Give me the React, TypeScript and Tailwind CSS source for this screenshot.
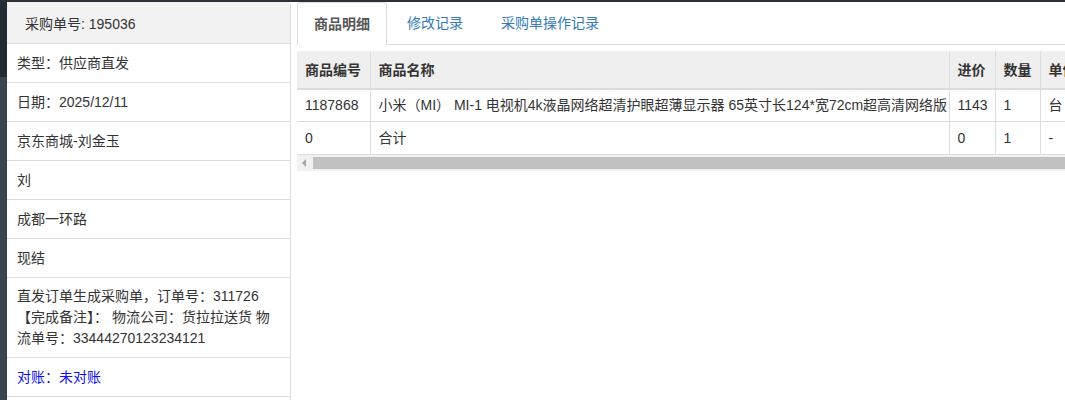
import React from "react";

const rows = [
  "类型：供应商直发",
  "日期：2025/12/11",
  "京东商城-刘金玉",
  "刘",
  "成都一环路",
  "现结",
];

export default function App() {
  return (
    <div
      className="w-[1065px] h-[400px] overflow-hidden bg-white flex flex-col text-[14px] leading-5 text-[#333]"
      style={{ fontFamily: '"Liberation Sans", Arial, "Noto Sans CJK SC", sans-serif' }}
    >
      <div className="h-[2px] bg-[#2a3138] shrink-0" />
      <div className="flex flex-1 min-h-0">
        {/* dark sidebar edge */}
        <div className="w-[7px] shrink-0 flex flex-col">
          <div className="h-[75px] bg-[#232a31] shrink-0" />
          <div className="flex-1 bg-[#3a444e]" />
        </div>
        {/* left panel */}
        <div className="w-[284px] shrink-0 border-r border-[#dcdcdc] rounded-tr-[4px] flex flex-col">
          <div className="h-[42px] shrink-0 bg-[#f2f2f2] pl-[18px] pt-[3px] flex items-center border-b border-[#dddddd] rounded-tr-[4px]">
            采购单号: 195036
          </div>
          {rows.map((r) => (
            <div key={r} className="shrink-0 px-[10px] py-[9px] border-b border-[#dddddd]">
              {r}
            </div>
          ))}
          <div className="shrink-0 px-[10px] py-[8px] leading-[21px] border-b border-[#dddddd]">
            直发订单生成采购单，订单号：311726
            <br />
            【完成备注】： 物流公司：货拉拉送货 物
            <br />
            流单号：33444270123234121
          </div>
          <div className="shrink-0 px-[10px] py-[9px] border-b border-[#dddddd] text-[#1010f0]">
            对账：未对账
          </div>
        </div>
        <div className="w-[6px] shrink-0" />
        {/* right panel */}
        <div className="flex-1 min-w-0 flex flex-col">
          <div className="flex border-b border-[#dddddd] h-[43px] shrink-0">
            <div className="h-[43px] px-[15px] flex items-center border border-b-0 border-[#dddddd] rounded-t-[4px] bg-white font-bold text-[#555] w-[90px] justify-center -mb-px">
              商品明细
            </div>
            <div className="h-[42px] ml-[20px] px-[0px] flex items-center text-[#337ab7] w-[74px]">
              修改记录
            </div>
            <div className="h-[42px] ml-[20px] flex items-center text-[#337ab7]">
              采购单操作记录
            </div>
          </div>
          <div className="mt-[6px] overflow-hidden shrink-0">
            <table className="table-fixed border-collapse whitespace-nowrap w-[900px]">
              <colgroup>
                <col className="w-[73px]" />
                <col className="w-[579px]" />
                <col className="w-[46px]" />
                <col className="w-[45px]" />
                <col className="w-[60px]" />
                <col className="w-[97px]" />
              </colgroup>
              <thead>
                <tr className="bg-[#efefef] h-[38px]">
                  <th className="px-[8px] text-left font-bold border-b-2 border-r border-[#dddddd]">商品编号</th>
                  <th className="px-[8px] text-left font-bold border-b-2 border-r border-[#dddddd]">商品名称</th>
                  <th className="px-[8px] text-left font-bold border-b-2 border-r border-[#dddddd]">进价</th>
                  <th className="px-[8px] text-left font-bold border-b-2 border-r border-[#dddddd]">数量</th>
                  <th className="px-[8px] text-left font-bold border-b-2 border-r border-[#dddddd]">单位</th>
                  <th className="px-[8px] text-left font-bold border-b-2 border-[#dddddd]">备注</th>
                </tr>
              </thead>
              <tbody>
                <tr className="h-[32px]">
                  <td className="px-[8px] border-b border-r border-[#dddddd]">1187868</td>
                  <td className="px-[8px] border-b border-r border-[#dddddd] overflow-hidden">
                    小米（MI） MI-1 电视机4k液晶网络超清护眼超薄显示器 65英寸长124*宽72cm超高清网络版
                  </td>
                  <td className="px-[8px] border-b border-r border-[#dddddd]">1143</td>
                  <td className="px-[8px] border-b border-r border-[#dddddd]">1</td>
                  <td className="px-[8px] border-b border-r border-[#dddddd]">台</td>
                  <td className="px-[8px] border-b border-[#dddddd]"></td>
                </tr>
                <tr className="h-[33px]">
                  <td className="px-[8px] border-b border-r border-[#dddddd]">0</td>
                  <td className="px-[8px] border-b border-r border-[#dddddd]">合计</td>
                  <td className="px-[8px] border-b border-r border-[#dddddd]">0</td>
                  <td className="px-[8px] border-b border-r border-[#dddddd]">1</td>
                  <td className="px-[8px] border-b border-r border-[#dddddd]">-</td>
                  <td className="px-[8px] border-b border-[#dddddd]"></td>
                </tr>
              </tbody>
            </table>
            {/* scrollbar */}
            <div className="h-[16px] bg-[#f1f1f1] flex items-center">
              <div className="w-[16px] h-[16px] flex items-center justify-center">
                <svg width="6" height="8" viewBox="0 0 6 8">
                  <polygon points="4,0 4,8 0,4" fill="#a3a3a3" />
                </svg>
              </div>
              <div className="flex-1 h-[12px] bg-[#c1c1c1]" />
            </div>
          </div>
        </div>
      </div>
    </div>
  );
}
